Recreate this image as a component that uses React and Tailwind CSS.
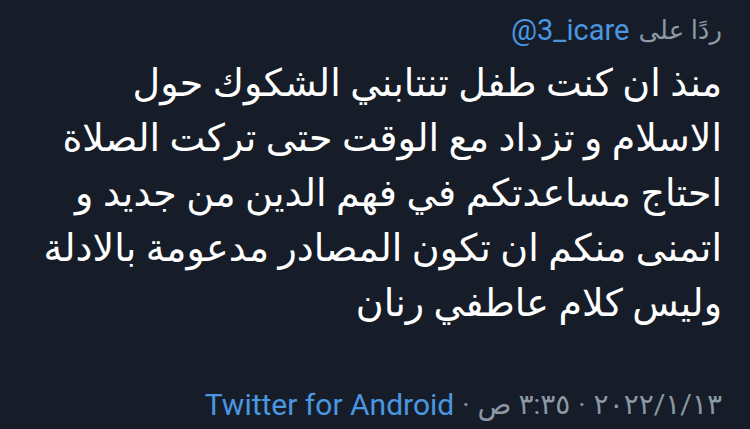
export default function App() {
  const lines = [
    "منذ ان كنت طفل تنتابني الشكوك حول",
    "الاسلام و تزداد مع الوقت حتى تركت الصلاة",
    "احتاج مساعدتكم في فهم الدين من جديد و",
    "اتمنى منكم ان تكون المصادر مدعومة بالادلة",
    "وليس كلام عاطفي رنان",
  ];

  return (
    <div
      dir="rtl"
      className="w-[750px] h-[429px] bg-[#161d28] flex flex-col pr-[28px] pl-4 overflow-hidden"
      style={{ fontFamily: '"Roboto", "DejaVu Sans", sans-serif' }}
    >
      <div className="mt-[14px] h-[32px] flex items-center gap-[9px] leading-none">
        <span className="text-[#8b98a5] text-[26px]">ردًا على</span>
        <span dir="ltr" className="text-[#4a97e1] text-[29px]">@3_icare</span>
      </div>

      <div className="mt-[10px] flex flex-col text-white text-[38px] leading-[55px]">
        {lines.map((l) => (
          <p key={l} className="whitespace-nowrap">
            {l}
          </p>
        ))}
      </div>

      <div className="mt-[58px] h-[32px] flex items-center gap-[8px] leading-none text-[#8b98a5] text-[28px]">
        <span>٢٠٢٢/١/١٣</span>
        <span>·</span>
        <span>٣:٣٥ ص</span>
        <span>·</span>
        <span dir="ltr" className="text-[#4a97e1] text-[30px]">Twitter for Android</span>
      </div>
    </div>
  );
}
